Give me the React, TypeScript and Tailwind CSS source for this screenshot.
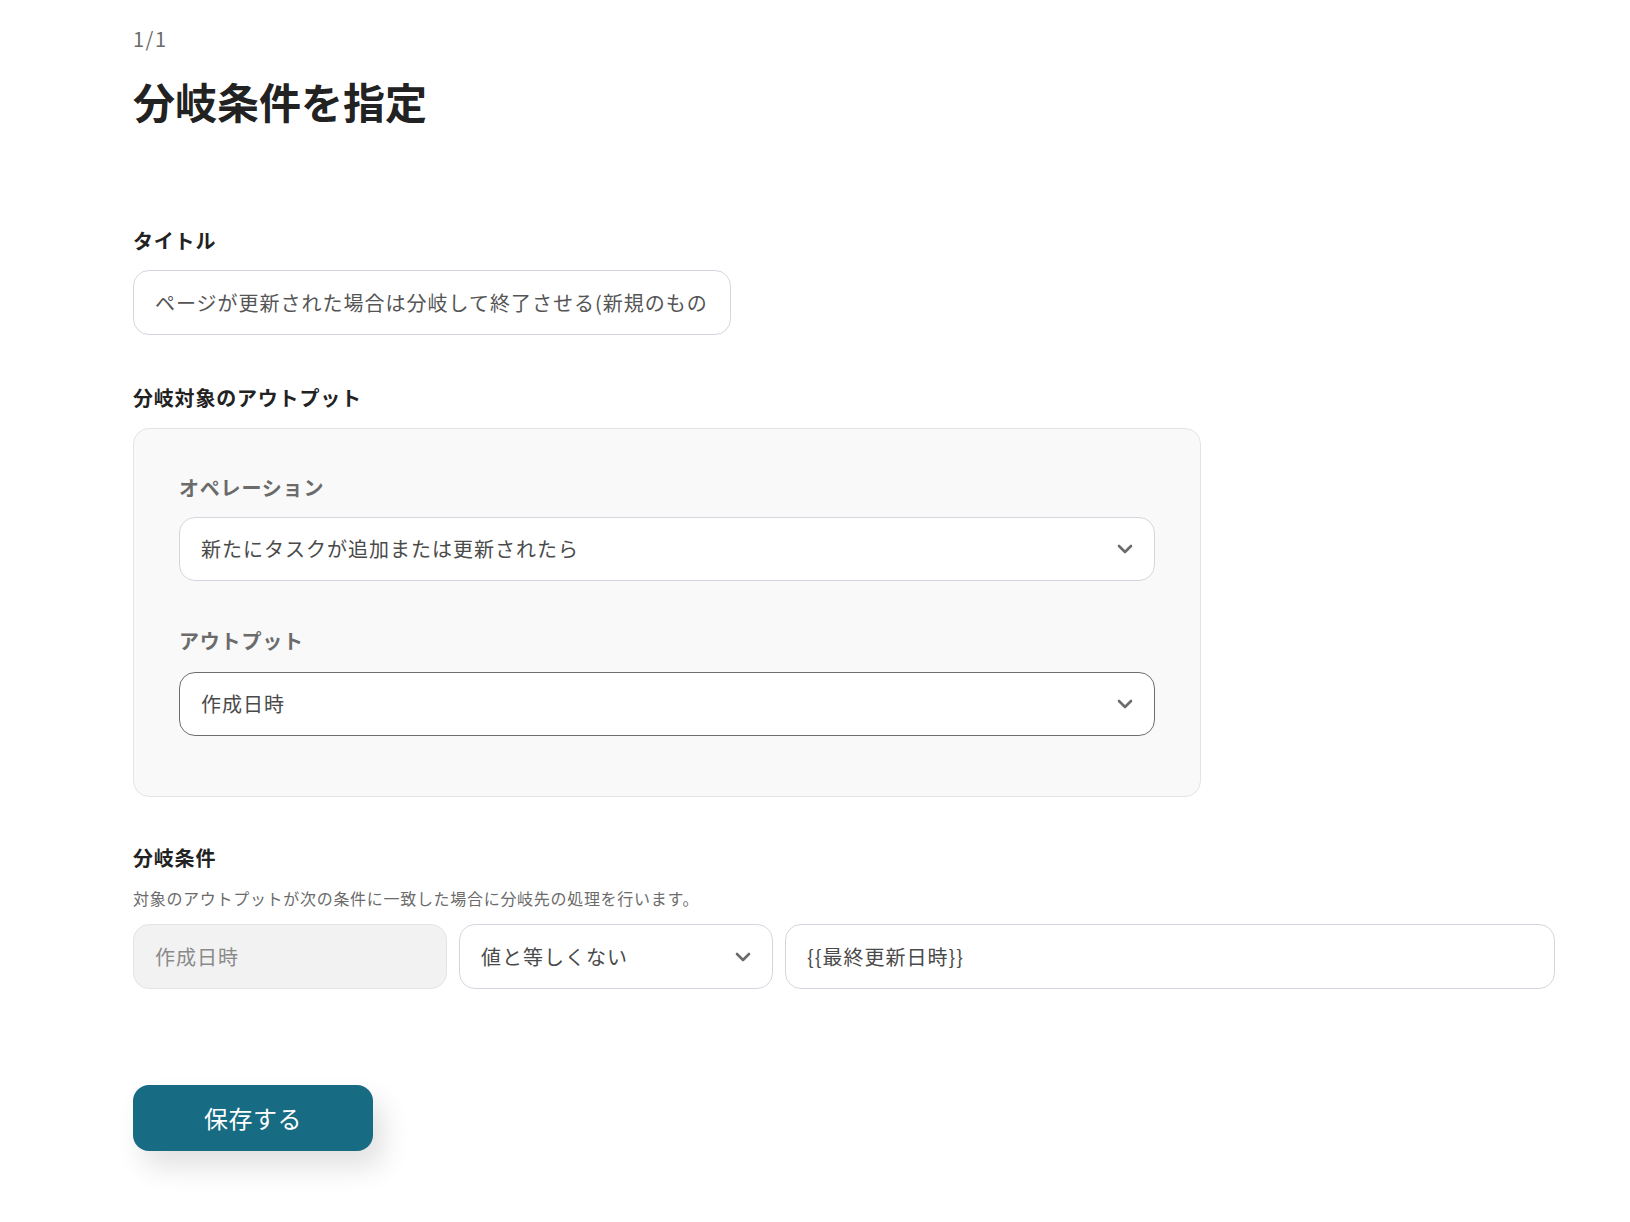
import React from "react";

/* =========================================================
   SMALL PIECES
========================================================= */

function Chevron() {
  return (
    <svg width="16" height="10" viewBox="0 0 16 10" fill="none" className="shrink-0">
      <path
        d="M2 2l6 6 6-6"
        stroke="#6b6b6b"
        strokeWidth="2.6"
        strokeLinecap="round"
        strokeLinejoin="round"
      />
    </svg>
  );
}

function SelectBox({ value, focused }: { value: string; focused?: boolean }) {
  return (
    <div
      className={
        focused
          ? "flex h-[64px] items-center justify-between rounded-[16px] border border-[#6e6e6e] bg-white pl-[21px] pr-[21px]"
          : "flex h-[64px] items-center justify-between rounded-[16px] border border-[#d3d7dd] bg-white pl-[21px] pr-[21px]"
      }
    >
      <span className="text-[20px] tracking-[1px] text-[#4a4a4a]">{value}</span>
      <Chevron />
    </div>
  );
}

/* =========================================================
   PAGE
========================================================= */

export default function App() {
  return (
    <main
      className="min-h-[1222px] bg-white pl-[133px] pt-[25px] pb-[70px]"
      style={{ fontFamily: '"Noto Sans CJK JP", "Noto Sans", "Liberation Sans", sans-serif' }}
    >
      {/* HEADER */}
      <div className="text-[20px] leading-[28px] tracking-[1.5px] text-[#6b6b6b]">1/1</div>
      <h1 className="mt-[20px] text-[42px] leading-[56px] font-bold text-[#222]">分岐条件を指定</h1>

      {/* TITLE */}
      <div className="mt-[98px] text-[20px] leading-[28px] tracking-[0.8px] font-bold text-[#222]">タイトル</div>
      <div className="mt-[15px] flex h-[65px] w-[598px] items-center overflow-hidden rounded-[16px] border border-[#d3d7dd] bg-white pl-[21px] pr-[18px]">
        <span className="whitespace-nowrap overflow-hidden text-[20px] tracking-[1px] text-[#555]">
          ページが更新された場合は分岐して終了させる(新規のもの
        </span>
      </div>

      {/* TARGET OUTPUT */}
      <div className="mt-[49px] text-[20px] leading-[28px] tracking-[0.8px] font-bold text-[#222]">分岐対象のアウトプット</div>
      <div className="mt-[16px] w-[1068px] rounded-[16px] border border-[#e4e4e4] bg-[#f9f9f9] px-[45px] pt-[45px] pb-[60px]">
        <div className="text-[20px] leading-[28px] tracking-[0.8px] font-bold text-[#6b6b6b]">オペレーション</div>
        <div className="mt-[15px]">
          <SelectBox value="新たにタスクが追加または更新されたら" />
        </div>
        <div className="mt-[46px] text-[20px] leading-[28px] tracking-[0.8px] font-bold text-[#6b6b6b]">アウトプット</div>
        <div className="mt-[17px]">
          <SelectBox value="作成日時" focused />
        </div>
      </div>

      {/* CONDITION */}
      <div className="mt-[47px] text-[20px] leading-[28px] tracking-[0.8px] font-bold text-[#222]">分岐条件</div>
      <div className="mt-[14px] text-[16px] leading-[24px] tracking-[0.7px] text-[#6b6b6b]">
        対象のアウトプットが次の条件に一致した場合に分岐先の処理を行います。
      </div>
      <div className="mt-[14px] flex gap-[12px]">
        <div className="flex h-[65px] w-[314px] items-center rounded-[16px] border border-[#e4e4e4] bg-[#f2f2f2] pl-[21px]">
          <span className="text-[20px] tracking-[1px] text-[#8a8a8a]">作成日時</span>
        </div>
        <div className="flex h-[65px] w-[314px] items-center justify-between rounded-[16px] border border-[#d3d7dd] bg-white pl-[21px] pr-[21px]">
          <span className="text-[20px] tracking-[1px] text-[#4a4a4a]">値と等しくない</span>
          <Chevron />
        </div>
        <div className="flex h-[65px] w-[770px] items-center rounded-[16px] border border-[#d3d7dd] bg-white pl-[21px]">
          <span className="text-[20px] tracking-[1px] text-[#4a4a4a]">{"{{最終更新日時}}"}</span>
        </div>
      </div>

      {/* SUBMIT */}
      <button
        type="button"
        className="mt-[96px] flex h-[66px] w-[240px] items-center justify-center rounded-[16px] bg-[#176b82] text-[24px] tracking-[0.5px] text-white shadow-[10px_16px_28px_rgba(0,0,0,0.12)]"
      >
        保存する
      </button>
    </main>
  );
}
